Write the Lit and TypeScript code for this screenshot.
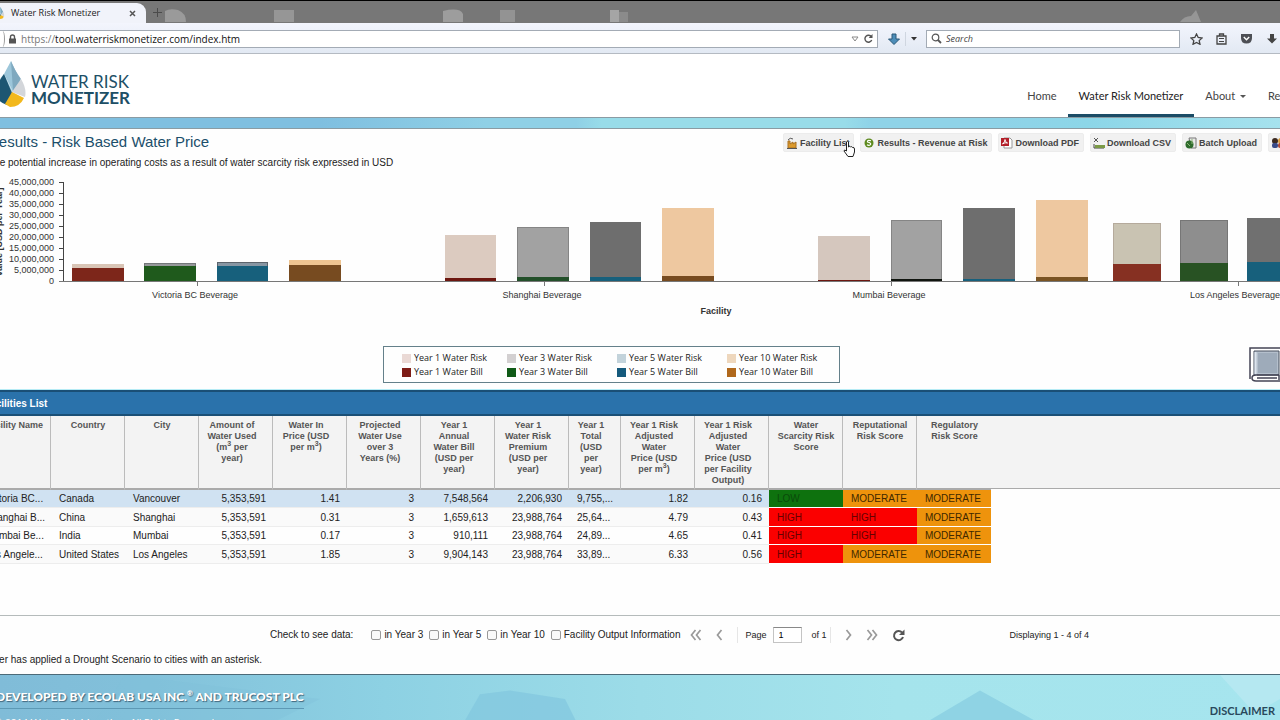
import { LitElement, html, svg, css } from "lit";
import { customElement } from "lit/decorators.js";
import { classMap } from "lit/directives/class-map.js";

type Bar = { x: number; w: number; risk: number; bill: number; riskFill: string; billFill: string; edge: string };
type Group = { label: string; tick: number; labelX: number; bars: Bar[] };

const bar = (x: number, w: number, risk: number, bill: number, riskFill: string, billFill: string, edge = riskFill): Bar =>
  ({ x, w, risk, bill, riskFill, billFill, edge });

// Bar heights are in pixels above the zero line.
const GROUPS: Group[] = [
  { label: "Victoria BC Beverage", tick: 197, labelX: 195, bars: [
    bar(72, 52, 17, 13, "#d9c5b6", "#7d261a"),
    bar(144, 52, 18, 15, "#96999b", "#1f5a1c", "#74777a"),
    bar(217, 51, 19, 15, "#8796a3", "#17607c", "#5c646c"),
    bar(289, 52, 21, 16, "#eec491", "#774b20"),
  ] },
  { label: "Shanghai Beverage", tick: 544, labelX: 542, bars: [
    bar(445, 51, 46, 3, "#dccbc0", "#6d1710"),
    bar(517, 52, 54, 4, "#a2a2a2", "#23502a", "#858585"),
    bar(590, 51, 59, 4, "#6e6e6e", "#17607c"),
    bar(662, 52, 73, 5, "#eec8a0", "#774b20"),
  ] },
  { label: "Mumbai Beverage", tick: 891, labelX: 889, bars: [
    bar(818, 52, 45, 1, "#d5c7be", "#6d1710"),
    bar(891, 51, 61, 2, "#a2a2a2", "#10150f", "#858585"),
    bar(963, 52, 73, 2, "#6e6e6e", "#17607c"),
    bar(1036, 52, 81, 4, "#eec8a0", "#7a5423"),
  ] },
  { label: "Los Angeles Beverage", tick: 1238, labelX: 1235, bars: [
    bar(1113, 48, 58, 17, "#c9c3b2", "#863022", "#b5aa9c"),
    bar(1180, 48, 61, 18, "#8e8e8e", "#285223", "#767676"),
    bar(1247, 49, 63, 19, "#707070", "#17607c"),
  ] },
];

const AXIS = ["45,000,000", "40,000,000", "35,000,000", "30,000,000", "25,000,000", "20,000,000", "15,000,000", "10,000,000", "5,000,000", "0"];

const LEGEND = [
  ["#ead9d5", "Year 1 Water Risk"], ["#d3d0d1", "Year 3 Water Risk"], ["#c3d3db", "Year 5 Water Risk"], ["#eed7bd", "Year 10 Water Risk"],
  ["#7d1c16", "Year 1 Water Bill"], ["#0f5a17", "Year 3 Water Bill"], ["#155a7c", "Year 5 Water Bill"], ["#b0681c", "Year 10 Water Bill"],
];

const sup = (a: string, b: string) => html`${a}<sup>3</sup>${b}`;

const COLUMNS = [
  { h: "Facility Name", w: 74 }, { h: "Country", w: 74 }, { h: "City", w: 74 },
  { h: sup("Amount of\nWater Used\n(m", " per\nyear)"), w: 74 }, { h: sup("Water In\nPrice (USD\nper m", ")"), w: 74 },
  { h: "Projected\nWater Use\nover 3\nYears (%)", w: 74 }, { h: "Year 1\nAnnual\nWater Bill\n(USD per\nyear)", w: 74 },
  { h: "Year 1\nWater Risk\nPremium\n(USD per\nyear)", w: 74 }, { h: "Year 1\nTotal\n(USD\nper\nyear)", w: 52 },
  { h: sup("Year 1 Risk\nAdjusted\nWater\nPrice (USD\nper m", ")"), w: 74 },
  { h: "Year 1 Risk\nAdjusted\nWater\nPrice (USD\nper Facility\nOutput)", w: 74 },
  { h: "Water\nScarcity Risk\nScore", w: 74 }, { h: "Reputational\nRisk Score", w: 74 }, { h: "Regulatory\nRisk Score", w: 74 },
];

const ROWS = [
  ["Victoria BC...", "Canada", "Vancouver", "5,353,591", "1.41", "3", "7,548,564", "2,206,930", "9,755,...", "1.82", "0.16", "LOW", "MODERATE", "MODERATE"],
  ["Shanghai B...", "China", "Shanghai", "5,353,591", "0.31", "3", "1,659,613", "23,988,764", "25,64...", "4.79", "0.43", "HIGH", "HIGH", "MODERATE"],
  ["Mumbai Be...", "India", "Mumbai", "5,353,591", "0.17", "3", "910,111", "23,988,764", "24,89...", "4.65", "0.41", "HIGH", "HIGH", "MODERATE"],
  ["Los Angele...", "United States", "Los Angeles", "5,353,591", "1.85", "3", "9,904,143", "23,988,764", "33,89...", "6.33", "0.56", "HIGH", "MODERATE", "MODERATE"],
];

const isMetric = (c: number) => c > 2 && c < 11;

const dropIcon = (w: number, h: number) => html`<svg width=${w} height=${h} viewBox="0 0 30 46" aria-hidden="true">
  <path d="M15 0 L26 24 L17 31 L8 13 Z" fill="#9cc6da"/><path d="M15 0 L8 13 L17 31 L14 34 L0 26 Q3 18 8 13 Z" fill="#b3d5e3"/>
  <path d="M8 13 L16 32 L11 44 Q0 41 0 30 Q1 22 8 13 Z" fill="#1d5672"/>
  <path d="M15 0 Q18 8 25 18 L17 30 Z" fill="#7fa9bf"/><path d="M25 18 Q31 28 29 36 L16 31 Z" fill="#d3d6da"/>
  <path d="M16 31 L28 37 Q24 46 14 46 L9 43 Z" fill="#f2b81c"/></svg>`;

@customElement("browser-chrome")
export class BrowserChrome extends LitElement {
  static styles = css`
    :host { display: block; font-family: "Open Sans", sans-serif; color: #222; }
    .strip { display: flex; align-items: stretch; height: 22px; border-top: 1px solid #000; background: #777; overflow: hidden; }
    .tab { display: flex; align-items: center; width: 146px; margin-top: 2px; background: #f1f3fa; border-radius: 0 9px 0 0; font-size: 9px; }
    .fav { margin-left: -4px; width: 9px; display: flex; }
    .tab-title { margin-left: 6px; flex: 1; white-space: nowrap; }
    button { border: 0; background: none; padding: 0; margin: 0; display: flex; color: #444; cursor: pointer; }
    .close { margin-right: 10px; }
    .new { margin-left: 7px; align-items: center; }
    .ghosts { flex: 1; min-width: 0; }
    .bar { display: flex; align-items: center; height: 29px; padding-top: 1px; background: linear-gradient(#f3f5fd, #e2e9f3); border-bottom: 1px solid #b4bac2; }
    .field { display: flex; align-items: center; height: 16px; background: #fff; border: 1px solid #a3abb5; }
    .url { flex: 1; min-width: 0; border-left: 0; }
    .back { width: 4px; height: 16px; border-right: 1px solid #999; border-radius: 0 50% 50% 0; }
    .lock { margin-left: 3px; }
    .scheme { margin-left: 4px; color: #777; font-size: 10px; }
    input { border: 0; outline: 0; padding: 0; background: none; font: 10px "Open Sans", sans-serif; color: #111; min-width: 0; flex: 1; }
    .tri { margin-right: 5px; }
    .reload { margin-right: 4px; }
    .dl { margin-left: 10px; }
    .sep { width: 1px; height: 14px; background: #cfd6e0; margin: 0 5px; }
    .search { width: 252px; margin-left: 9px; }
    .search svg { margin: 0 4px; }
    .search input { font-size: 9px; font-style: italic; }
    .search input::placeholder { color: #444; opacity: 1; }
    .tools { display: flex; align-items: center; margin-left: 10px; gap: 13px; margin-right: 2px; }
  `;
  render() {
    return html`
      <div class="strip">
        <div class="tab"><span class="fav">${dropIcon(9, 12)}</span><span class="tab-title">Water Risk Monetizer</span>
          <button class="close" aria-label="Close tab"><svg width="7" height="7"><path d="M1 1 L6 6 M6 1 L1 6" stroke="#555" stroke-width="1.5"/></svg></button>
        </div>
        <button class="new" aria-label="New tab"><svg width="9" height="9"><path d="M4.5 0 V9 M0 4.5 H9" stroke="#4b4b4b"/></svg></button>
        <svg class="ghosts" height="22" aria-hidden="true">
          <path d="M3 21 V10 Q8 7 16 9 Q24 12 24 21 Z" fill="#9a9a9a"/><rect x="112" y="9" width="20" height="12" fill="#969696"/>
          <path d="M281 21 V10 Q298 6 301 13 V21 Z" fill="#9d9d9d"/><rect x="338" y="9" width="15" height="12" fill="#939393"/>
          <rect x="448" y="9" width="9" height="12" fill="#a5a5a5"/><rect x="457" y="11" width="9" height="10" fill="#8b8b8b"/>
          <path d="M1018 21 Q1022 15 1029 15 L1034 9 L1039 21 Z" fill="#969696"/>
        </svg>
      </div>
      <div class="bar">
        <div class="field url">
          <span class="back"></span>
          <svg class="lock" width="9" height="10"><path d="M2.5 5 V3 Q2.500 1 4.500 1 Q6.500 1 6.500 3 V5" fill="none" stroke="#555" stroke-width="1.400"/><rect x="1" y="4.500" width="7" height="5" fill="#555"/></svg>
          <span class="scheme">https://</span>
          <input aria-label="Address" value="tool.waterriskmonetizer.com/index.htm">
          <svg class="tri" width="8" height="6"><path d="M1 1 H7 L4 5 Z" fill="none" stroke="#888"/></svg>
          <button class="reload" aria-label="Reload"><svg width="9" height="9"><path d="M7.400 2.800 A3.500 3.500 0 1 0 7.700 6" fill="none" stroke="#555" stroke-width="1.400"/><path d="M8.500 0 V4 H4.700 Z" fill="#555"/></svg></button>
        </div>
        <button class="dl" aria-label="Download helper"><svg width="12" height="12"><path d="M4 1 H8 V6 H11.500 L6 11.500 L0.500 6 H4 Z" fill="#4d8db8" stroke="#2a5878"/></svg></button>
        <span class="sep"></span>
        <button aria-label="More downloads"><svg width="6" height="4"><path d="M0 0 H6 L3 3.500 Z" fill="#333"/></svg></button>
        <div class="field search">
          <svg width="11" height="11"><circle cx="4.500" cy="4.500" r="3.300" fill="none" stroke="#555" stroke-width="1.200"/><path d="M7 7 L10 10" stroke="#555" stroke-width="1.800"/></svg>
          <input aria-label="Search" placeholder="Search">
        </div>
        <div class="tools">
          <button aria-label="Bookmark"><svg width="13" height="12"><path d="M6.500 1 L8.200 4.500 L12 5 L9.200 7.600 L10 11.300 L6.500 9.400 L3 11.300 L3.800 7.600 L1 5 L4.800 4.500 Z" fill="none" stroke="#444" stroke-width="1.300"/></svg></button>
          <button aria-label="Bookmarks list"><svg width="11" height="12"><path d="M1 3 H10 V11 H1 Z M3.500 3 V1 H7.500 V3" fill="none" stroke="#444" stroke-width="1.300"/><path d="M3 5.500 H8 M3 8.500 H8" stroke="#444"/></svg></button>
          <button aria-label="Pocket"><svg width="13" height="12"><path d="M1 1 H12 V5 Q12 10.500 6.500 10.500 Q1 10.500 1 5 Z" fill="#4d4f55"/><path d="M3.800 4 L6.500 6.800 L9.200 4" fill="none" stroke="#fff" stroke-width="1.400"/></svg></button>
          <button aria-label="Downloads"><svg width="12" height="12"><path d="M4 1 H8 V5.500 H11 L6 10.500 L1 5.500 H4 Z" fill="#444"/></svg></button>
        </div>
      </div>`;
  }
}

@customElement("water-chart")
export class WaterChart extends LitElement {
  static styles = css`
    :host { display: block; height: 151px; }
    svg { display: block; width: 100%; height: 151px; }
    text { font: 9px "Liberation Sans", sans-serif; fill: #333; }
    .bold { font-weight: bold; }
  `;
  render() {
    const zero = 110;
    return html`<svg role="img" aria-label="Value in USD per year by facility">
      ${AXIS.map((t, i) => svg`<text x="54" y=${14 + i * 11} text-anchor="end">${t}</text>
        <path d="M59 ${11.5 + i * 11} H64" stroke="#444"/>`)}
      <text class="bold" text-anchor="middle" transform="translate(2 61) rotate(-90)">Value [USD per Year]</text>
      <path d="M63.500 11 V111" stroke="#444"/>
      ${GROUPS.map((g) => svg`
        ${g.bars.map((b) => svg`
          <rect x=${b.x} y=${zero - b.risk} width=${b.w} height=${b.risk} fill=${b.edge}/>
          <rect x=${b.x + 1} y=${zero - b.risk + 1} width=${b.w - 2} height=${b.risk - 1} fill=${b.riskFill}/>
          <rect x=${b.x} y=${zero - b.bill} width=${b.w} height=${b.bill} fill=${b.billFill}/>`)}
        <path d="M${g.tick + 0.5} 111 V115" stroke="#777"/>
        <text x=${g.labelX} y="127" text-anchor="middle">${g.label}</text>`)}
      <path d="M59 110.500 H1400" stroke="#777"/>
      <text class="bold" x="716" y="143" text-anchor="middle">Facility</text>
    </svg>`;
  }
}

@customElement("facility-table")
export class FacilityTable extends LitElement {
  static styles = css`
    :host { display: block; font: 10px/11px "Liberation Sans", sans-serif; color: #222; }
    .title { margin: 0; height: 22px; line-height: 23px; border: solid #1a4f76; border-width: 2px 0; background: #2a72ab; color: #fff; font-size: 10px; font-weight: bold; }
    .title span { margin-left: -16px; }
    .grid { background: linear-gradient(#f3f3f3 72px, #aaa 72px) 0 0 / 100% 73px no-repeat; }
    table { table-layout: fixed; border-collapse: separate; border-spacing: 0; width: 1014px; margin-left: -23px; }
    th { height: 65px; padding: 4px 2px 3px 3px; vertical-align: top; font-size: 9px; font-weight: bold; color: #555; border-right: 1px solid #bbb; border-bottom: 1px solid #aaa; text-align: center; white-space: pre; }
    th.metric { padding-right: 9px; padding-left: 2px; }
    th:last-child { border-right: 0; }
    sup { font-size: 7px; line-height: 0; }
    td { height: 18px; padding: 0 8px; white-space: nowrap; overflow: hidden; border-bottom: 1px solid #ededed; box-sizing: border-box; }
    tr:nth-child(even) td { height: 19px; background-color: #fafafa; }
    td.num { text-align: right; padding-right: 7px; }
    tr.sel td { background-color: #d0e2f2; }
    td.low, td.high, td.mod { border-bottom: 1px solid #fff8; background-clip: padding-box; }
    tbody tr td.low { background-color: #0e720e; color: #0a4a0a; }
    tbody tr td.high { background-color: #fb0000; color: #600; }
    tbody tr td.mod { background-color: #ee930c; color: #402800; }
  `;
  render() {
    return html`
      <h2 class="title"><span>Facilities List</span></h2>
      <div class="grid">
        <table>
          <colgroup>${COLUMNS.map((c) => html`<col width=${c.w}>`)}</colgroup>
          <thead><tr>${COLUMNS.map((c, i) => html`<th scope="col" class=${classMap({ metric: isMetric(i) })}>${c.h}</th>`)}</tr></thead>
          <tbody>${ROWS.map((r, i) => html`<tr class=${classMap({ sel: i === 0 })}>${r.map((v, c) => html`<td class=${classMap({
            num: isMetric(c) && c !== 8, low: v === "LOW", high: v === "HIGH", mod: v === "MODERATE",
          })}>${v}</td>`)}</tr>`)}</tbody>
        </table>
      </div>`;
  }
}

@customElement("app-root")
export class AppRoot extends LitElement {
  static styles = css`
    :host { display: flex; flex-direction: column; position: relative; min-height: 100vh; overflow: hidden; background: #fefefe; font: 10px/12px "Liberation Sans", sans-serif; color: #222; }
    button { font: inherit; color: inherit; cursor: pointer; }
    header { display: flex; height: 63px; background: #fff; }
    .brand { display: flex; padding-top: 7px; margin-left: -4px; text-decoration: none; color: #1d4f66; }
    .words { display: flex; flex-direction: column; margin: 13px 0 0 5px; font: 17px/16px Lato, sans-serif; }
    .words b { font-weight: 700; }
    nav { display: flex; align-items: flex-end; margin-left: auto; margin-right: -48px; font: 11px/16px Lato, sans-serif; }
    nav a { color: #444; text-decoration: none; padding: 0 11px 10px; border-bottom: 3px solid transparent; white-space: nowrap; }
    nav a.on { border-color: #1b4c66; color: #222; }
    .caret { margin-left: 2px; vertical-align: middle; }
    .band { height: 10px; border: solid #8a9ba3; border-width: 1px 0; background: linear-gradient(90deg, #7fbfe0 0 25%, #8fd0e6 38% 45%, #98dce9 47% 66%, #8fd3e8 68% 78%, #8cd6e8 85%, #a6e2ee); }
    .head { display: flex; align-items: flex-start; justify-content: space-between; height: 38px; padding-top: 4px; }
    h1 { margin: 0 0 0 -12px; font-size: 15px; line-height: 18px; font-weight: normal; color: #1b4f6b; white-space: nowrap; }
    .lead { margin: 6px 0 0 -12px; white-space: nowrap; }
    .actions { display: flex; gap: 6px; margin-right: -16px; }
    .actions button { display: flex; align-items: center; gap: 2px; height: 19px; padding: 0 4px 0 2px; border: 1px solid #ececec; border-radius: 2px; background: #f1f1f1; font-size: 9px; font-weight: bold; color: #444; white-space: nowrap; }
    .legend-row { display: flex; justify-content: space-between; align-items: flex-start; padding: 24px 0 6px; }
    .legend { display: grid; grid-template-columns: 105px 110px 110px 101px; row-gap: 2px; margin: 0 0 0 383px; padding: 5px 11px 4px 18px; border: 1px solid #64808a; font: 9px/12px "Open Sans", sans-serif; list-style: none; }
    .legend li { display: flex; align-items: center; gap: 3px; white-space: nowrap; }
    .swatch { width: 9px; height: 9px; }
    .book { margin: 1px -7px 0 0; }
    .panel { border-top: 1px solid #b5ebf5; }
    .pager { display: flex; align-items: center; height: 38px; margin-top: 51px; padding-left: 270px; border-top: 1px solid #b5bbbb; white-space: nowrap; }
    .pager button { display: flex; padding: 0; border: 0; background: none; }
    .checks { display: flex; gap: 6px; margin-left: 18px; }
    .checks label { display: flex; align-items: center; gap: 3px; }
    .checks input { appearance: none; width: 10px; height: 10px; margin: 0; border: 1px solid #999; border-radius: 2px; background: #fafafa; }
    .steps { display: flex; align-items: center; gap: 14px; margin-left: 10px; font-size: 9px; }
    .page-no { display: flex; align-items: center; gap: 6px; padding: 0 3px 0 7px; border: solid #e6e6e6; border-width: 0 1px; }
    .page-no input { width: 22px; height: 14px; padding: 0 0 0 5px; margin-right: 4px; border: 1px solid #c4c4c4; border-top-color: #888; font: 9px "Liberation Sans", sans-serif; }
    .count { margin-left: 105px; font-size: 9px; }
    .note { margin: 0 0 8px -17px; line-height: 12px; }
    footer { position: relative; display: flex; justify-content: space-between; align-items: flex-start; flex: 1; border-top: 1px solid #4c6a78; background: #a0dfe9; overflow: hidden; }
    .facets { position: absolute; inset: 0; width: 100%; height: 100%; }
    .credit { position: relative; margin-left: -4px; color: #fff; font: 12px/14px Lato, sans-serif; text-shadow: 1px 1px 1px #40647a; white-space: nowrap; }
    .credit a { display: block; padding: 15px 0 4px; color: inherit; text-decoration: none; font-weight: 900; border-bottom: 1px solid #5d99b5; }
    .credit sup { font-size: 7px; line-height: 0; }
    .credit p { margin: 6px 0 0 -2px; font-size: 10px; }
    .disclaimer { position: relative; margin: 29px 5px 0 0; color: #29495c; font: 700 11px/14px Lato, sans-serif; text-decoration: none; }
    .cursor { position: absolute; left: 843px; top: 140px; }
  `;
  render() {
    return html`
      <browser-chrome></browser-chrome>
      <header>
        <a class="brand" href="#" aria-label="Water Risk Monetizer">${dropIcon(30, 46)}<span class="words"><span>WATER RISK</span><b>MONETIZER</b></span></a>
        <nav><a href="#">Home</a><a class="on" href="#">Water Risk Monetizer</a>
          <a href="#">About <svg class="caret" width="6" height="4"><path d="M0 0 H6 L3 3 Z" fill="#555"/></svg></a><a href="#">Resources</a></nav>
      </header>
      <div class="band"></div>
      <div class="head">
        <div><h1>Results - Risk Based Water Price</h1><p class="lead">The potential increase in operating costs as a result of water scarcity risk expressed in USD</p></div>
        <div class="actions">
          <button><svg width="12" height="12"><path d="M2 11 V4 H4 V7 L7 5 V7 L10 5 V11 Z" fill="#dc9a2c" stroke="#a87022"/><path d="M2 3 Q4 0 7 2 M1 11.500 H11" fill="none" stroke="#555"/></svg>Facility List</button>
          <button><svg width="12" height="12"><circle cx="6" cy="6" r="4.500" fill="#5d8a1e"/><path d="M8 3.800 Q4 2.500 4.500 5 Q8.500 6 7.500 7.600 Q6 9 4 7.800" fill="none" stroke="#fff" stroke-width="1.200"/></svg>Results - Revenue at Risk</button>
          <button><svg width="12" height="12"><path d="M3 1 H9 L11 3 V11 H3 Z" fill="#fff" stroke="#999"/><rect width="8" height="8" y="1" fill="#b3202a"/><path d="M1.500 7 Q4 5 4 2.500 Q4 5 6.500 6 Q4 5 1.500 7" fill="none" stroke="#fff"/></svg>Download PDF</button>
          <button><svg width="12" height="12"><path d="M1 1 L5 5 M5 1 L1 5" stroke="#555"/><path d="M1 7 V11 H11" fill="none" stroke="#444"/><rect x="2" y="8" width="10" height="3" fill="#7b9a45"/></svg>Download CSV</button>
          <button><svg width="12" height="12"><path d="M4 1 H11 V11 H6 Z" fill="#e8e8e8" stroke="#777"/><circle cx="4.500" cy="7.500" r="4" fill="#2e6b2c"/><path d="M2 6 L5 9 M7 2 V7" stroke="#8db878"/></svg>Batch Upload</button>
          <button aria-label="Users"><svg width="20" height="12"><circle cx="4" cy="4" r="3" fill="#3c2a20"/><circle cx="10" cy="4" r="3" fill="#d89a3c"/><rect x="1" y="6" width="6" height="5" rx="2" fill="#374a88"/><rect x="7" y="6" width="6" height="5" rx="2" fill="#b04838"/></svg></button>
        </div>
      </div>
      <water-chart></water-chart>
      <div class="legend-row">
        <ul class="legend">${LEGEND.map(([c, t]) => html`<li><span class="swatch" style="background:${c}"></span>${t}</li>`)}</ul>
        <svg class="book" width="38" height="36" aria-hidden="true"><path d="M1 32 V1 H36 V30" fill="#fff" stroke="#445" stroke-width="1.500"/>
          <path d="M5 29 V4 H30 V28 H8" fill="#b4bfcc" stroke="#48505f"/><rect x="9" y="6" width="19" height="20" fill="#9eabba"/><path d="M6.500 5 V27" stroke="#dde5ee" stroke-width="2"/>
          <path d="M30 28 H7 Q3 28 3 31 Q3 34 7 34 H34 M30 28 V33 M8 31 H28" fill="none" stroke="#445" stroke-width="1.500"/></svg>
      </div>
      <div class="panel"><facility-table></facility-table></div>
      <div class="pager">
        <span>Check to see data:</span>
        <div class="checks">${["in Year 3", "in Year 5", "in Year 10", "Facility Output Information"].map((t) => html`<label><input type="checkbox">${t}</label>`)}</div>
        <div class="steps">
          <button aria-label="First page"><svg width="12" height="12"><path d="M5.500 1 L1.500 6 L5.500 11 M10.500 1 L6.500 6 L10.500 11" fill="none" stroke="#999" stroke-width="1.700"/></svg></button>
          <button aria-label="Previous page"><svg width="7" height="12"><path d="M5.500 1 L1.500 6 L5.500 11" fill="none" stroke="#999" stroke-width="1.700"/></svg></button>
          <div class="page-no"><label for="page">Page</label><input id="page" value="1"><span>of 1</span></div>
          <button aria-label="Next page"><svg width="7" height="12"><path d="M1.500 1 L5.500 6 L1.500 11" fill="none" stroke="#999" stroke-width="1.700"/></svg></button>
          <button aria-label="Last page"><svg width="12" height="12"><path d="M1.500 1 L5.500 6 L1.500 11 M6.500 1 L10.500 6 L6.500 11" fill="none" stroke="#999" stroke-width="1.700"/></svg></button>
          <button aria-label="Refresh"><svg width="13" height="13"><path d="M10 3.500 A4.600 4.600 0 1 0 11 8" fill="none" stroke="#555" stroke-width="2"/><path d="M12.500 0.500 V6 H7 Z" fill="#555"/></svg></button>
        </div>
        <span class="count">Displaying 1 - 4 of 4</span>
      </div>
      <p class="note">*User has applied a Drought Scenario to cities with an asterisk.</p>
      <footer>
        <svg class="facets" viewBox="0 0 1280 45" preserveAspectRatio="none" aria-hidden="true">
          <defs><linearGradient id="sky"><stop offset="0" stop-color="#80bcd8"/><stop offset="0.1" stop-color="#82c0da"/><stop offset="0.3" stop-color="#8dd1e3"/><stop offset="0.5" stop-color="#9cdce8"/><stop offset="0.7" stop-color="#a5e4ec"/><stop offset="1" stop-color="#a6e5ee"/></linearGradient></defs>
          <rect width="1280" height="45" fill="url(#sky)"/>
          <path d="M125 0 L320 20 L260 45 H90 Z" fill="#7fc0da" opacity="0.4"/><path d="M480 16 L510 13 L565 20 L580 45 H460 Z" fill="#82c6de" opacity="0.7"/>
          <path d="M915 45 L980 13 L1050 45 Z" fill="#8fd3e4"/><path d="M1220 0 H1280 V20 L1255 32 Z" fill="#b5e8f1"/></svg>
        <div class="credit"><a href="#">DEVELOPED BY ECOLAB USA INC.<sup>®</sup> AND TRUCOST PLC</a><p>© 2014 Water Risk Monetizer. All Rights Reserved</p></div>
        <a class="disclaimer" href="#">DISCLAIMER</a>
      </footer>
      <svg class="cursor" width="13" height="18" aria-hidden="true"><path d="M3.500 9 V2 Q4.500 0.500 5.500 2 V7 Q7 5.500 7.500 7 Q9 6 9.500 7.500 Q11.500 7 11.500 9 V12 L10 16.500 H5 L1 11 Q1 9 3.500 11 Z" fill="#fff" stroke="#222"/></svg>`;
  }
}
